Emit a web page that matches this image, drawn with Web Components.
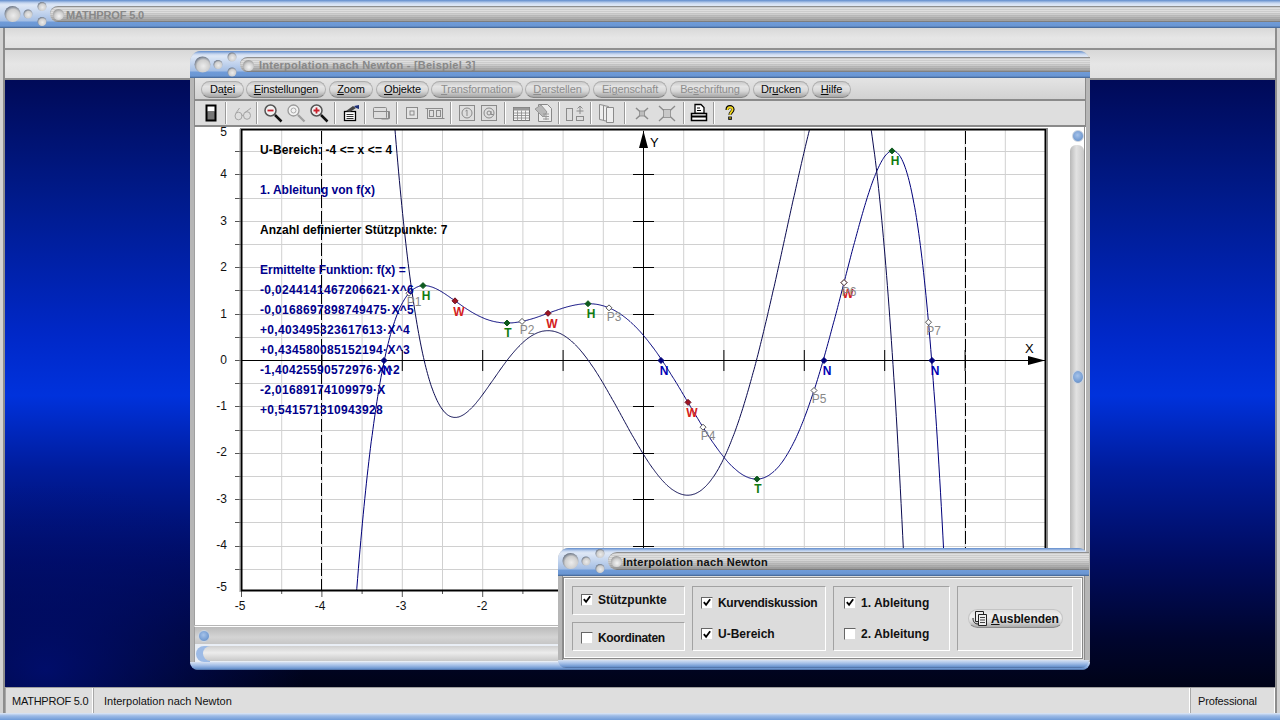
<!DOCTYPE html>
<html lang="de">
<head>
<meta charset="utf-8">
<title>MATHPROF 5.0</title>
<style>
  html, body { margin: 0; padding: 0; overflow: hidden; background: #000; font-family: "Liberation Sans", Arial, sans-serif; }
  .b { color: #00008c; }
  .n { letter-spacing: .33px; }
  .u { letter-spacing: .13px; }
</style>
</head>
<body>

<app-frame>
  <mdi-window slot="windows" caption="Interpolation nach Newton - [Beispiel 3]" style="left:190px;top:51px;width:900px;height:619px">
    <menu-pill slot="menu" style="width:43px;margin-left:6px">Da<u>t</u>ei</menu-pill>
    <menu-pill slot="menu" style="width:80px;margin-left:2px"><u>E</u>instellungen</menu-pill>
    <menu-pill slot="menu" style="width:44px;margin-left:3px"><u>Z</u>oom</menu-pill>
    <menu-pill slot="menu" style="width:53px;margin-left:3px"><u>O</u>bjekte</menu-pill>
    <menu-pill slot="menu" off style="width:92px;margin-left:2px"><u>T</u>ransformation</menu-pill>
    <menu-pill slot="menu" off style="width:65px;margin-left:2px"><u>D</u>arstellen</menu-pill>
    <menu-pill slot="menu" off style="width:74px;margin-left:3px">Ei<u>g</u>enschaft</menu-pill>
    <menu-pill slot="menu" off style="width:80px;margin-left:3px">Be<u>s</u>chriftung</menu-pill>
    <menu-pill slot="menu" style="width:56px;margin-left:3px">Dr<u>u</u>cken</menu-pill>
    <menu-pill slot="menu" style="width:39px;margin-left:3px"><u>H</u>ilfe</menu-pill>

    <tb-icon slot="tools" name="device" style="margin-left:5px"></tb-icon>
    <tb-sep slot="tools" style="margin-left:3px"></tb-sep>
    <tb-icon slot="tools" name="glasses" style="margin-left:5px"></tb-icon>
    <tb-sep slot="tools" style="margin-left:2px"></tb-sep>
    <tb-icon slot="tools" name="zoomout" style="margin-left:4px"></tb-icon>
    <tb-icon slot="tools" name="zoom" style="margin-left:1px"></tb-icon>
    <tb-icon slot="tools" name="zoomin" style="margin-left:1px"></tb-icon>
    <tb-sep slot="tools" style="margin-left:4px"></tb-sep>
    <tb-icon slot="tools" name="clip" style="margin-left:4px"></tb-icon>
    <tb-sep slot="tools" style="margin-left:2px"></tb-sep>
    <tb-icon slot="tools" name="wins" style="margin-left:4px"></tb-icon>
    <tb-sep slot="tools" style="margin-left:4px"></tb-sep>
    <tb-icon slot="tools" name="box" style="margin-left:3px"></tb-icon>
    <tb-icon slot="tools" name="dbl" style="margin-left:1px"></tb-icon>
    <tb-sep slot="tools" style="margin-left:4px"></tb-sep>
    <tb-icon slot="tools" name="circ1" style="margin-left:4px"></tb-icon>
    <tb-icon slot="tools" name="circ2"></tb-icon>
    <tb-sep slot="tools" style="margin-left:4px"></tb-sep>
    <tb-icon slot="tools" name="table" style="margin-left:4px"></tb-icon>
    <tb-icon slot="tools" name="sheet"></tb-icon>
    <tb-sep slot="tools" style="margin-left:4px"></tb-sep>
    <tb-icon slot="tools" name="swap" style="margin-left:4px"></tb-icon>
    <tb-sep slot="tools" style="margin-left:4px"></tb-sep>
    <tb-icon slot="tools" name="pages" style="margin-left:4px"></tb-icon>
    <tb-sep slot="tools" style="margin-left:6px"></tb-sep>
    <tb-icon slot="tools" name="cross" style="margin-left:5px"></tb-icon>
    <tb-icon slot="tools" name="cross2" style="margin-left:3px"></tb-icon>
    <tb-sep slot="tools" style="margin-left:5px"></tb-sep>
    <tb-icon slot="tools" name="print" style="margin-left:3px"></tb-icon>
    <tb-sep slot="tools" style="margin-left:3px"></tb-sep>
    <tb-icon slot="tools" name="help" style="margin-left:4px"></tb-icon>

    <math-plot><span class="u">U-Bereich: -4 &lt;= x &lt;= 4</span>

<span class="b">1. Ableitung von f(x)</span>

Anzahl definierter Stützpunkte: 7

<span class="b">Ermittelte Funktion: f(x) =
<span class="n">-0,0244141467206621·X^6
-0,0168697898749475·X^5
+0,403495323617613·X^4
+0,434580085152194·X^3
-1,40425590572976·X^2
-2,01689174109979·X
+0,541571310943928</span></span></math-plot>
  </mdi-window>

  <tool-dialog slot="windows" caption="Interpolation nach Newton" style="left:558px;top:548px;width:531px;height:120px">
    <div style="display:grid;grid-template-columns:113px 134px 117px 116px;grid-template-rows:29px 29px;row-gap:7px;column-gap:7px;width:max-content">
      <group-box style="grid-column:1;grid-row:1;padding:0 0 2px 8px"><check-box checked>Stützpunkte</check-box></group-box>
      <group-box style="grid-column:1;grid-row:2;padding:2px 0 0 8px"><check-box style="letter-spacing:-.35px">Koordinaten</check-box></group-box>
      <group-box tall style="grid-column:2;grid-row:1 / 3;padding:0 0 0 8px"><check-box checked style="letter-spacing:-.3px">Kurvendiskussion</check-box><check-box checked>U-Bereich</check-box></group-box>
      <group-box tall style="grid-column:3;grid-row:1 / 3;padding:0 0 0 10px"><check-box checked>1. Ableitung</check-box><check-box>2. Ableitung</check-box></group-box>
      <group-box style="grid-column:4;grid-row:1 / 3;padding:0 0 0 10px"><pill-button><u>A</u>usblenden</pill-button></group-box>
    </div>
  </tool-dialog>
</app-frame>

<script>
// Titelleiste mit den runden Knoepfen, wird vom Hauptfenster und den Kindfenstern benutzt
class TitleBar extends HTMLElement {
    constructor(){
        super();
        this.attachShadow({mode:"open"});
    }
    connectedCallback(){
        const caption = this.getAttribute("caption") || "";
        const h = parseInt(this.getAttribute("height") || "28");
        const top = parseInt(this.getAttribute("strip-top") || "6");
        const cy = top + (h - top - 6) / 2;
        this.shadowRoot.innerHTML = `
            <style>
                :host{ display:block; height:${h}px; position:relative; }
                .bar{
                    height:100%; display:flex; align-items:stretch; box-sizing:border-box;
                    background:linear-gradient(#5f8bcc 0,#c6d6ef 3px,#dfe8f6 5px,#a4bee4 ${h-7}px,#6f9bd8 ${h-6}px,#6a96d2 ${h-2}px,#3f618f ${h}px);
                    border-radius:var(--corner,0) var(--corner,0) 0 0;
                }
                svg{ flex:none; width:50px; height:${h}px; overflow:visible; }
                .strip{
                    flex:1; margin:${top}px 0 6px; display:flex; align-items:center; min-width:0;
                    border-radius:10px 0 0 10px;
                    background:
                      linear-gradient(rgba(255,255,255,0) 35%,rgba(110,110,110,.55) 90%,#707070 100%),
                      repeating-linear-gradient(#cdcdcd 0 1px,#dfdfdf 1px 2px);
                    border-top:1px solid #8f8f8f;
                    font:bold 11px "Liberation Sans",Arial,sans-serif;
                    letter-spacing:var(--title-spacing,-.15px);
                    color:var(--title-color,#888);
                    white-space:nowrap;
                }
                .dot{ flex:none; width:11px; height:11px; border-radius:50%; margin:0 var(--title-gap,2px) 0 3px;
                      background:radial-gradient(circle at 55% 65%,#f4f4f4 0,#cfcfcf 45%,#6f6f6f 100%); }
            </style>
            <div class="bar">
                <svg viewBox="0 0 50 ${h}">
                    <defs><radialGradient id="k" cx=".55" cy=".6" r=".6">
                        <stop offset="0" stop-color="#ececec"/><stop offset=".65" stop-color="#cecece"/><stop offset="1" stop-color="#6a7484"/>
                    </radialGradient></defs>
                    <circle cx="12.5" cy="${cy}" r="8" fill="url(#k)"/>
                    <circle cx="28" cy="${cy}" r="4.5" fill="url(#k)"/>
                    <circle cx="42" cy="${cy-7.5}" r="4.5" fill="url(#k)"/>
                    <circle cx="42" cy="${cy+7.5}" r="4.5" fill="url(#k)"/>
                </svg>
                <div class="strip"><span class="dot"></span>${caption}</div>
            </div>`;
    }
}

// Hauptrahmen: Titel, zwei leere Baender, Desktop, Statusleiste
class AppFrame extends HTMLElement {
    constructor(){
        super();
        this.attachShadow({mode:"open"});
        this.shadowRoot.innerHTML = `
            <style>
                :host{ display:block; width:1280px; height:720px; position:relative; overflow:hidden; background:#d2d2d2; }
                .main{ height:100%; display:grid; grid-template-rows:28px 22px 30px 1fr 26px 7px; }
                .band{ margin:0 3px; border-left:2px solid #8d8d8d; border-right:2px solid #8d8d8d; background:linear-gradient(#d8d8d8,#e6e6e6 50%,#e0e0e0); border-bottom:2px solid #8f8f8f; }
                .desk{
                    margin:0 3px; border-left:2px solid #8d8d8d; border-right:2px solid #8d8d8d;
                    background:
                      radial-gradient(260px 190px at 40px 590px,rgba(0,16,130,.75),rgba(0,16,130,0)),
                      linear-gradient(#000a58 0,#001a8a 19%,#0028c8 42%,#0032dc 52%,#001c9c 64%,#000c60 79%,#00052e 92%,#000318 100%);
                }
                .status{
                    margin:0 3px; border:2px solid #8d8d8d; border-bottom:0; border-top:1px solid #a0a0a0; background:#dedede;
                    display:grid; grid-template-columns:88px 1fr 85px;
                    font:11px "Liberation Sans",Arial,sans-serif; color:#111;
                }
                .status div{ display:flex; align-items:center; border-right:1px solid #fff; border-left:1px solid #a8a8a8; white-space:nowrap; }
                .status .a{ padding-left:6px; letter-spacing:-.25px; }
                .status .c{ padding-left:10px; }
                .status .d{ padding-left:7px; letter-spacing:-.15px; }
                .foot{ background:linear-gradient(#dfe8f6,#9dbbe6 40%,#6f9bd8); }
                .layer{ position:absolute; inset:0; pointer-events:none; }
            </style>
            <div class="main">
                <title-bar caption="MATHPROF 5.0" height="28"></title-bar>
                <div class="band"></div>
                <div class="band"></div>
                <div class="desk"></div>
                <div class="status"><div class="a">MATHPROF 5.0</div><div class="c">Interpolation nach Newton</div><div class="d">Professional</div></div>
                <div class="foot"></div>
            </div>
            <div class="layer"><slot name="windows"></slot></div>`;
    }
}

// Kindfenster auf dem Desktop
class MdiWindow extends HTMLElement {
    constructor(){
        super();
        this.attachShadow({mode:"open"});
    }
    connectedCallback(){
        this.shadowRoot.innerHTML = `
            <style>
                :host{ display:block; position:absolute; --corner:11px; --title-spacing:.25px; --title-gap:5px; }
                .win{ height:100%; display:grid; grid-template-rows:27px 21px 28px 498px 19px 18px 8px; background:#b6b6b6; border-radius:11px 11px 9px 9px; }
                .menu{ margin:0 4px; display:flex; align-items:center; background:linear-gradient(#e4e4e4,#d2d2d2); border-left:1px solid #8a8a8a; border-right:1px solid #8a8a8a; padding-top:1px; box-sizing:border-box; }
                .tools{ margin:0 4px; display:flex; align-items:center; background:#dedede; border:solid #8a8a8a; border-width:2px 1px 2px 1px; padding-right:5px; box-sizing:border-box; }
                .work{ margin:0 4px; border-left:1px solid #a0a0a0; background:#fff; display:grid; grid-template-columns:874px 16px; }
                .vs{ position:relative; border-right:1px solid #8f8f8f; margin-left:1px; }
                .vs .rail{ position:absolute; left:0; right:0; top:18px; bottom:0; border-radius:6px 6px 0 0; background:linear-gradient(90deg,#b8b8b8,#e2e2e2 45%,#c9c9c9); }
                .knob{ position:absolute; width:10px; height:10px; border-radius:50%; background:radial-gradient(circle at 45% 40%,#a6c3ea,#6f98cf 70%,#7a8aa0); border:1px solid #cdd5e0; }
                .hs{ margin:1px 4px 0; border-top:1px solid #fff; position:relative; background:linear-gradient(#bbb,#d4d4d4 60%,#c6c6c6); border-left:1px solid #a0a0a0; }
                .rail2{ margin:0 4px; background:#e9eef5; position:relative; border-left:1px solid #a0a0a0; }
                .rail2 i{ position:absolute; left:8px; right:0; top:2px; bottom:1px; border-radius:8px 0 0 8px; background:linear-gradient(#d0d0d0,#ececec 45%,#c8c8c8); }
                .rail2 b{ position:absolute; left:1px; width:14px; top:2px; bottom:0; border-radius:8px 0 0 8px; background:#9dbbe6; }
                .foot{ border-radius:0 0 9px 9px; background:linear-gradient(#d8e2f2,#a7c1e8 40%,#6f98d2 80%,#4a6a9c); }
            </style>
            <div class="win">
                <title-bar caption="${this.getAttribute("caption")}" height="27"></title-bar>
                <div class="menu"><slot name="menu"></slot></div>
                <div class="tools"><slot name="tools"></slot></div>
                <div class="work">
                    <slot></slot>
                    <div class="vs"><div class="rail"></div><span class="knob" style="left:2px;top:3px"></span><span class="knob" style="left:2px;top:243px;height:12px"></span></div>
                </div>
                <div class="hs"><span class="knob" style="left:3px;top:3px"></span></div>
                <div class="rail2"><b></b><i></i></div>
                <div class="foot"></div>
            </div>`;
    }
}

// Kleines Werkzeugfenster
class ToolDialog extends HTMLElement {
    constructor(){
        super();
        this.attachShadow({mode:"open"});
    }
    connectedCallback(){
        this.shadowRoot.innerHTML = `
            <style>
                :host{ display:block; position:absolute; --corner:11px; --title-color:#111; --title-spacing:.28px; --title-gap:1px; }
                .win{ height:100%; display:grid; grid-template-rows:28px 84px 8px; background:#b6b6b6; border-radius:11px 11px 9px 9px; }
                .body{ margin:0 4px; background:#dcdcdc; border:solid #8c8c8c; border-width:0 1px; display:flex; }
                .frame{ flex:1; margin:1px 1px 1px 0; border:1px solid #888; outline:1px solid #fff; outline-offset:-2px; padding:8px 0 0 8px; box-sizing:border-box; }
                .foot{ border-radius:0 0 9px 9px; background:linear-gradient(#d8e2f2,#a7c1e8 40%,#6f98d2 80%,#4a6a9c); }
            </style>
            <div class="win">
                <title-bar caption="${this.getAttribute("caption")}" height="28" strip-top="4"></title-bar>
                <div class="body"><div class="frame"><slot></slot></div></div>
                <div class="foot"></div>
            </div>`;
    }
}

class MenuPill extends HTMLElement {
    constructor(){
        super();
        this.attachShadow({mode:"open"});
    }
    connectedCallback(){
        const off = this.hasAttribute("off");
        this.shadowRoot.innerHTML = `
            <style>
                :host{ display:block; height:17px; flex:none; box-sizing:border-box; }
                div{
                    height:100%; box-sizing:border-box; display:flex; align-items:center; justify-content:center;
                    border-radius:9px; border:1px solid #aeaeae; border-bottom-color:#858585;
                    background:linear-gradient(#cbcbcb,#e4e4e4 30%,#d8d8d8 60%,#a4a4a4);
                    font:11px "Liberation Sans",Arial,sans-serif; letter-spacing:-.12px; color:${off ? "#8d8d8d" : "#0a0a0a"}; white-space:nowrap;
                }
            </style>
            <div><span><slot></slot></span></div>`;
    }
}

class TbSep extends HTMLElement {
    constructor(){
        super();
        this.attachShadow({mode:"open"});
        this.shadowRoot.innerHTML = `
            <style>:host{ display:block; flex:none; width:2px; height:22px; box-sizing:border-box; border-left:1px solid #9a9a9a; border-right:1px solid #fff; }</style>`;
    }
}

const ICONS = {
    device:`<rect x="5.5" y="2.5" width="11" height="17" fill="#000"/><rect x="7.5" y="4.5" width="7" height="5" fill="#fff"/><rect x="7.5" y="9.5" width="7" height="8" fill="#777"/>`,
    glasses:`<g fill="none" stroke="#a4a4a4"><ellipse cx="6.5" cy="14" rx="3.5" ry="3.8"/><ellipse cx="15" cy="13.5" rx="3.5" ry="3.8"/><path d="M10 14c1-1.5 1-1.5 1.6-.5M4 11 7.500 6M13 10.500 19 6"/></g>`,
    zoomout:`<circle cx="8.500" cy="8.500" r="5.500" fill="#f2f2f2" stroke="#555" stroke-width="1.500"/><path d="M13 13l6.500 6.500" stroke="#111" stroke-width="2.500"/><path d="M5.500 8.500h6" stroke="#c8202c" stroke-width="1.800"/>`,
    zoom:`<circle cx="8.500" cy="8.500" r="5.500" fill="#f2f2f2" stroke="#9a9a9a" stroke-width="1.300"/><circle cx="8.500" cy="8.500" r="2.500" fill="none" stroke="#aaa"/><path d="M13 13l6.500 6.500" stroke="#a0a0a0" stroke-width="2.300"/>`,
    zoomin:`<circle cx="8.500" cy="8.500" r="5.500" fill="#f2f2f2" stroke="#555" stroke-width="1.500"/><path d="M13 13l6.500 6.500" stroke="#111" stroke-width="2.500"/><path d="M5.500 8.500h6M8.500 5.500v6" stroke="#c8202c" stroke-width="1.800"/>`,
    clip:`<rect x="4.500" y="9.500" width="11" height="9" fill="#fff" stroke="#000" stroke-width="1.300"/><path d="M6.500 12.500h7M6.500 14.500h7M6.500 16.500h7" stroke="#000" stroke-width=".8"/><path d="M6 9l7-5 3 2-6 4z" fill="#444"/><path d="M14 4l5-1v4l-3-1z" fill="#1c2f78"/>`,
    wins:`<g fill="none" stroke="#8b8b8b"><rect x="3.500" y="5.500" width="13" height="11" rx="1"/><path d="M3.500 9.500h15v7.500h-7"/><path d="M16.500 9.500h3v7h-8"/></g>`,
    box:`<rect x="5.500" y="5.500" width="11" height="11" fill="#e4e4e4" stroke="#8b8b8b"/><rect x="9" y="9" width="4" height="4" fill="none" stroke="#8b8b8b"/>`,
    dbl:`<g fill="none" stroke="#8b8b8b"><rect x="3.500" y="6.500" width="15" height="10"/><rect x="5.500" y="8.500" width="4" height="6"/><rect x="12.500" y="8.500" width="4" height="6"/><path d="M1.500 6.500h3M17.500 16.500h3"/></g>`,
    circ1:`<g fill="none" stroke="#8b8b8b"><rect x="3.500" y="3.500" width="15" height="15"/><circle cx="11" cy="11" r="5"/><path d="M11 8v6M9.500 9l1.500-1"/></g>`,
    circ2:`<g fill="none" stroke="#8b8b8b"><rect x="3.500" y="3.500" width="15" height="15"/><circle cx="11" cy="11" r="5"/><circle cx="11" cy="11" r="2"/><path d="M13 9v3.500h2.500"/></g>`,
    table:`<rect x="3.500" y="5.500" width="16" height="13" fill="#f4f4f4" stroke="#777"/><rect x="3.500" y="5.500" width="16" height="3" fill="#999"/><path d="M3.500 11h16M3.500 13.500h16M3.500 16h16M7.500 8.500v10M11.500 8.500v10M15.500 8.500v10" stroke="#888" stroke-width=".8"/>`,
    sheet:`<path d="M6.500 2.500h9l4 4v13h-13z" fill="#ececec" stroke="#888"/><path d="M3 7l6-4 6 7-4 5z" fill="#b8b8b8" stroke="#999"/><path d="M11 12h6M11 14.500h6M11 17h6M14 11v7" stroke="#999"/>`,
    swap:`<g fill="none" stroke="#8b8b8b"><rect x="2.500" y="6.500" width="6" height="12"/><rect x="12.500" y="14.500" width="7" height="4"/><path d="M16 12V4M13.500 6.500 16 4l2.500 2.500M12.500 9h7"/></g>`,
    pages:`<g fill="#eee" stroke="#8b8b8b"><path d="M3.500 2.500l5 1v15l-5-1z"/><path d="M7.500 3.500l5 1v15l-5-1z"/><path d="M10.500 5.500h7v15h-7z"/></g>`,
    cross:`<g stroke="#8b8b8b" stroke-width="1.500" fill="none"><path d="M5 6l12 11M17 6 5 17"/><rect x="8.500" y="9" width="5" height="5" fill="#bdbdbd" stroke-width=".8"/></g>`,
    cross2:`<g stroke="#8b8b8b" stroke-width="1.300" fill="none"><path d="M3 4l16 15M19 4 3 19"/><rect x="7.500" y="7.500" width="7" height="8" fill="#c8c8c8" stroke-width=".8"/></g>`,
    print:`<path d="M7 2.500h6l3 3v6H7z" fill="#fff" stroke="#000" stroke-width="1.300"/><path d="M9 6h3M9 8.500h4" stroke="#000"/><path d="M3.500 11.500h15v7h-15z" fill="#fff" stroke="#000" stroke-width="1.500"/><path d="M3.500 14.500h15" stroke="#000" stroke-width="2"/>`,
    help:`<g transform="translate(3 2.500) scale(.73)"><path d="M7 7.500c0-3 2-4.500 4-4.500s4 1.500 4 4c0 3-4 3.500-4 7" fill="none" stroke="#000" stroke-width="4.500"/><path d="M8.500 16.500h5v4.500h-5z" fill="#000"/><path d="M7.500 7.500c0-2.500 1.500-4 3.500-4s3.500 1.300 3.500 3.500c0 3-3.500 3.500-3.500 7" fill="none" stroke="#f2d820" stroke-width="2.500"/><rect x="10" y="17.500" width="2" height="2" fill="#f2d820"/></g>`
};

class TbIcon extends HTMLElement {
    constructor(){
        super();
        this.attachShadow({mode:"open"});
    }
    connectedCallback(){
        this.shadowRoot.innerHTML = `
            <style>:host{ display:block; flex:none; width:22px; height:22px; } svg{ display:block; }</style>
            <svg width="22" height="22" viewBox="0 0 22 22">${ICONS[this.getAttribute("name")]}</svg>`;
    }
}

// Das Koordinatensystem, f(x) wird aus den angezeigten Koeffizienten berechnet
class MathPlot extends HTMLElement {
    constructor(){
        super();
        this.attachShadow({mode:"open"});
    }
    f(x){
        return -0.0244141467206621*x**6 - 0.0168697898749475*x**5 + 0.403495323617613*x**4
             + 0.434580085152194*x**3 - 1.40425590572976*x**2 - 2.01689174109979*x + 0.541571310943928;
    }
    df(x){
        return 6*-0.0244141467206621*x**5 + 5*-0.0168697898749475*x**4 + 4*0.403495323617613*x**3
             + 3*0.434580085152194*x**2 - 2*1.40425590572976*x - 2.01689174109979;
    }
    getSvg(){
        const X = v => 643 + v*80.4;
        const Y = v => 360 - v*46.4;
        let s = "";
        // Gitter
        for (let i = -9; i <= 9; i++) s += `<path d="M${X(i/2)+.5} 130V590" stroke="#d0d0d0"/>`;
        for (let i = -9; i <= 9; i++) s += `<path d="M242 ${Math.round(Y(i/2))+.5}H1045" stroke="#d0d0d0"/>`;
        // Striche ausserhalb
        for (let i = -10; i <= 9; i++) s += `<path d="M${X(i/2)+.5} 590V${i%2?594:597}" stroke="#555"/>`;
        for (let i = -9; i <= 9; i++) s += `<path d="M235 ${Math.round(Y(i/2))+.5}H242" stroke="#555"/>`;
        // Achsen
        s += `<path d="M643.500 131V590M242 360.500H1045" stroke="#000"/>`;
        for (let i = -4; i <= 4; i++) if (i) {
            s += `<path d="M${X(i)+.5} 350V371" stroke="#000"/>`;
            s += `<path d="M633 ${Math.round(Y(i))+.5}H654" stroke="#000"/>`;
        }
        s += `<path d="M643.500 131l-4.500 17h9zM1045 360.500l-17-4.500v9z" fill="#000"/>`;
        s += `<path d="M321.500 131V590M965.500 131V590" stroke="#000" stroke-dasharray="13 3"/>`;
        // Kurven
        let p1 = "", p2 = "";
        for (let x = -5; x <= 5.001; x += .01) {
            const cmd = p1 ? "L" : "M";
            p1 += `${cmd}${X(x).toFixed(1)} ${Math.max(-400,Math.min(1200,Y(this.f(x)))).toFixed(1)}`;
            p2 += `${cmd}${X(x).toFixed(1)} ${Math.max(-400,Math.min(1200,Y(this.df(x)))).toFixed(1)}`;
        }
        s += `<g fill="none" clip-path="url(#fr)"><path d="${p1}" stroke="#00007a"/><path d="${p2}" stroke="#0a0a50"/></g>`;
        // Rahmen
        s += `<rect x="241.500" y="129.500" width="804" height="461" fill="none" stroke="#000" stroke-width="2"/>`;
        s += `<path d="M240 129V592M1047.500 129V592M240 128.500H1048" fill="none" stroke="#8a8a8a"/>`;
        // Beschriftung der Achsen
        const tx = (x,y,t,a="middle",c="#111") => `<text x="${x}" y="${y}" text-anchor="${a}" fill="${c}">${t}</text>`;
        [[5,136],[4,178],[3,225],[2,271],[1,318],[0,364],[-1,410],[-2,456],[-3,503],[-4,549],[-5,591]].forEach(a => s += tx(227,a[1],a[0],"end"));
        [[-5,240],[-4,320],[-3,401],[-2,482]].forEach(a => s += tx(a[1],610,a[0]));
        s += `<text x="650" y="147" fill="#000" font-size="13">Y</text><text x="1025" y="353" fill="#000" font-size="13">X</text>`;
        // Punkte
        const kinds = {
            P:["#fff","#555","#888",400,5,13], H:["#0e5a1e","#0e5a1e","#107c10",700,3,14], T:["#0e5a1e","#0e5a1e","#107c10",700,1,14],
            W:["#a01422","#6a1020","#d42020",700,4,15], N:["#00007a","#00007a","#0000b4",700,3,14]
        };
        const pts = [["N",384,"N"],["P",409,"P1"],["H",423,"H"],["W",455,"W"],["T",507,"T"],["P",522,"P2"],["W",548,"W"],["H",588,"H"],["P",609,"P3"],
            ["N",661,"N"],["W",688,"W"],["P",703,"P4"],["T",757,"T"],["P",814,"P5"],["N",824,"N"],["W",844,"W"],["P",844,"P6"],["H",892,"H"],["P",928.5,"P7"],["N",932,"N"]];
        pts.forEach(([k,px,l]) => {
            const [fill,stroke,col,wt,dx,dy] = kinds[k];
            const y = k === "N" ? 360.5 : Y(this.f((px-643)/80.4));
            s += `<path d="M${px} ${y-3}l3 3-3 3-3-3z" fill="${fill}" stroke="${stroke}"/>`;
            s += `<text x="${px+dx}" y="${y+dy}" text-anchor="middle" fill="${col}" font-weight="${wt}">${l}</text>`;
        });
        return s;
    }
    connectedCallback(){
        this.shadowRoot.innerHTML = `
            <style>
                :host{ display:block; width:874px; height:498px; position:relative; color:#000; }
                svg{ display:block; overflow:visible; font:12px "Liberation Sans",Arial,sans-serif; }
                .note{ position:absolute; left:65px; top:13px; font:bold 12px/20px "Liberation Sans",Arial,sans-serif; white-space:pre; }
            </style>
            <svg width="874" height="498" viewBox="195 127 874 498">
                <defs><clipPath id="fr"><rect x="242" y="130" width="803" height="460"/></clipPath></defs>
                ${this.getSvg()}
            </svg>
            <div class="note"><slot></slot></div>`;
    }
}

class GroupBox extends HTMLElement {
    constructor(){
        super();
        this.attachShadow({mode:"open"});
        this.shadowRoot.innerHTML = `
            <style>
                :host{ display:flex; flex-direction:column; justify-content:center; box-sizing:border-box;
                       border:1px solid; border-color:#a2a2a2 #fff #fff #a2a2a2; }
                :host([tall]){ justify-content:space-around; }
            </style>
            <slot></slot>`;
    }
}

class CheckBox extends HTMLElement {
    constructor(){
        super();
        this.attachShadow({mode:"open"});
    }
    connectedCallback(){
        const tick = this.hasAttribute("checked")
            ? `<svg width="11" height="11" viewBox="0 0 11 11"><path d="M2 5l2.500 3L9 2" fill="none" stroke="#000" stroke-width="2"/></svg>` : "";
        this.shadowRoot.innerHTML = `
            <style>
                :host{ display:flex; align-items:center; gap:5px; font:bold 12px "Liberation Sans",Arial,sans-serif; color:#111; white-space:nowrap; }
                .box{ flex:none; width:12px; height:12px; box-sizing:border-box; background:#fff; border:1px solid; border-color:#666 #ddd #ddd #666; display:flex; align-items:center; justify-content:center; }
            </style>
            <span class="box">${tick}</span><span><slot></slot></span>`;
    }
}

class PillButton extends HTMLElement {
    constructor(){
        super();
        this.attachShadow({mode:"open"});
        this.shadowRoot.innerHTML = `
            <style>
                :host{ display:flex; align-items:center; gap:1px; width:95px; height:19px; box-sizing:border-box; padding-left:3px;
                       border-radius:10px; border:1px solid #c4c4c4; border-bottom-color:#8a8a8a;
                       background:linear-gradient(#e0e0e0,#f0f0f0 40%,#d8d8d8 70%,#aaa);
                       font:bold 12px "Liberation Sans",Arial,sans-serif; letter-spacing:-.1px; color:#111; white-space:nowrap; }
                svg{ flex:none; }
            </style>
            <svg width="18" height="17" viewBox="0 0 18 17"><g fill="#eee" stroke="#222"><path d="M3.500 1.500h8v10h-8z"/><path d="M6.500 4.500h8v11h-8z"/></g><path d="M8 7.500h5M8 10h5M8 12.500h5" stroke="#444"/><path d="M1 8c0 4 2 6 5 6" fill="none" stroke="#222"/></svg>
            <span><slot></slot></span>`;
    }
}

customElements.define('title-bar', TitleBar);
customElements.define('app-frame', AppFrame);
customElements.define('mdi-window', MdiWindow);
customElements.define('tool-dialog', ToolDialog);
customElements.define('menu-pill', MenuPill);
customElements.define('tb-sep', TbSep);
customElements.define('tb-icon', TbIcon);
customElements.define('math-plot', MathPlot);
customElements.define('group-box', GroupBox);
customElements.define('check-box', CheckBox);
customElements.define('pill-button', PillButton);
</script>
</body>
</html>
